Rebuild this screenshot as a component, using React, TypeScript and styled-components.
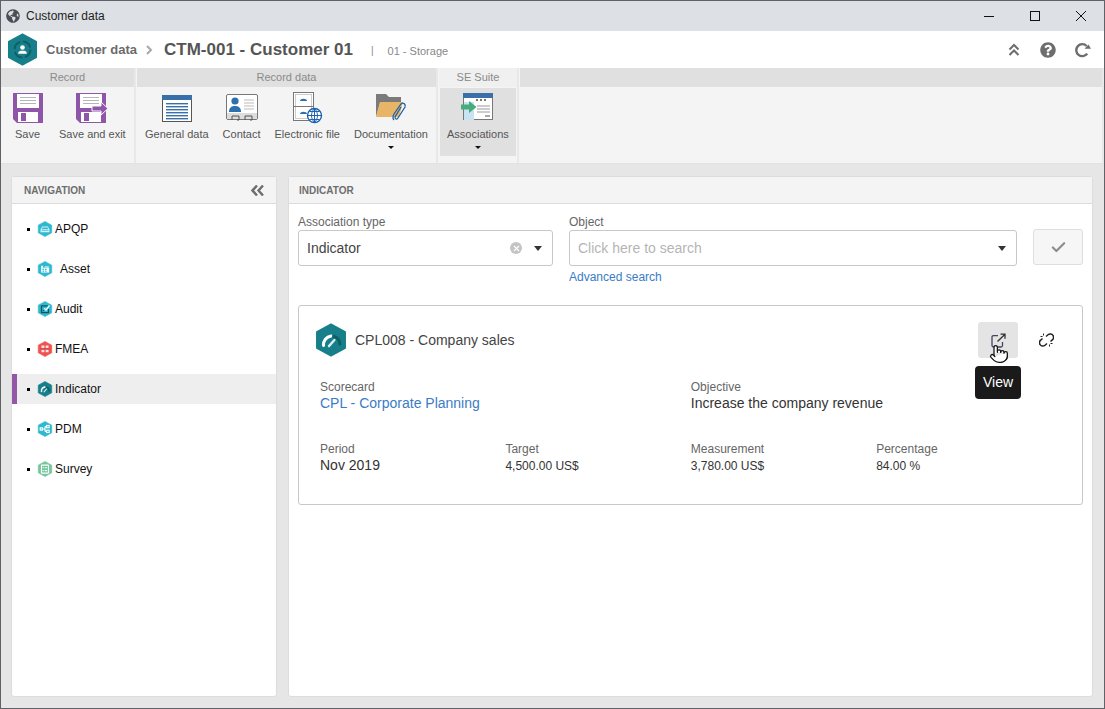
import React from "react";
import styled, { createGlobalStyle } from "styled-components";
import { FaGlobeAmericas, FaQuestionCircle } from "react-icons/fa";
import { Check, Pointer, X } from "lucide-react";

const GlobalStyle = createGlobalStyle`
  html, body {
    margin: 0;
    padding: 0;
    overflow: hidden;
  }
  body {
    font-family: "Liberation Sans", Arial, sans-serif;
    background: #e6e6e6;
  }
`;

const Win = styled.div`
  width: 1105px;
  height: 709px;
  box-sizing: border-box;
  border: 1px solid #5f6368;
  display: flex;
  flex-direction: column;
  overflow: hidden;
  background: #e6e6e6;
`;

const TitleBar = styled.div`
  height: 30px;
  flex: none;
  display: flex;
  align-items: center;
  background: #dde1e6;
  padding-left: 5px;
  color: #1e1e1e;
  font-size: 12px;
  gap: 6px;
`;

const WinControls = styled.div`
  margin-left: auto;
  display: flex;
  align-items: center;
`;

const WinButton = styled.div`
  width: 46px;
  height: 30px;
  display: flex;
  align-items: center;
  justify-content: center;
  color: #111;
`;

const Header = styled.div`
  height: 37px;
  flex: none;
  background: #fff;
  display: flex;
  align-items: center;
  padding-left: 5px;
`;

const Crumb = styled.span`
  margin-left: 7px;
  font-size: 13px;
  font-weight: bold;
  color: #6b6b6b;
`;

const CrumbSep = styled.span`
  margin: 0 11px 0 8px;
  color: #a8a8a8;
  display: flex;
`;

const RecordTitle = styled.span`
  font-size: 17px;
  font-weight: bold;
  color: #555;
`;

const Divider = styled.span`
  margin: 2px 0 0 18px;
  font-size: 10px;
  color: #888;
`;

const SubTitle = styled.span`
  margin: 2px 0 0 14px;
  font-size: 11px;
  color: #888;
`;

const HeaderTools = styled.div`
  margin-left: auto;
  margin-right: 13px;
  display: flex;
  align-items: center;
  gap: 18px;
  color: #6d6d6d;
`;

const Ribbon = styled.div`
  height: 95px;
  flex: none;
  display: flex;
  background: #f4f4f4;
  border-bottom: 1px solid #e2e2e2;
`;

const Group = styled.div<{ $width?: number; $grow?: boolean }>`
  width: ${(p) => (p.$width ? `${p.$width}px` : "auto")};
  flex: ${(p) => (p.$grow ? "1" : "none")};
  display: flex;
  flex-direction: column;
  border-right: 2px solid #e8e8e8;
  margin-right: ${(p) => (p.$grow ? 0 : 1)}px;
`;

const GroupLabel = styled.div<{ $light?: boolean }>`
  height: 19px;
  flex: none;
  background: ${(p) => (p.$light ? "#f0f0f0" : "#e0e0e0")};
  color: #8a8a8a;
  font-size: 11px;
  line-height: 19px;
  text-align: center;
`;

const GroupBody = styled.div<{ $pad?: number }>`
  display: flex;
  flex: 1;
  padding-left: ${(p) => p.$pad ?? 0}px;
`;

const RibbonItem = styled.div<{ $active?: boolean; $minWidth?: number }>`
  box-sizing: border-box;
  height: 68px;
  margin-top: 1px;
  padding: 0 7px;
  min-width: ${(p) => p.$minWidth ?? 0}px;
  display: flex;
  flex-direction: column;
  align-items: center;
  background: ${(p) => (p.$active ? "#e0e0e0" : "transparent")};
  color: #555;
  font-size: 11px;
  white-space: nowrap;
`;

const RibbonIcon = styled.div`
  height: 32px;
  margin-top: 5px;
  display: flex;
  align-items: flex-start;
  justify-content: center;
`;

const RibbonText = styled.div`
  margin-top: 2px;
  line-height: 14px;
`;

const Caret = styled.div<{ $size?: number; $depth?: number; $color?: string }>`
  width: 0;
  height: 0;
  border-left: ${(p) => p.$size ?? 3}px solid transparent;
  border-right: ${(p) => p.$size ?? 3}px solid transparent;
  border-top: ${(p) => p.$depth ?? p.$size ?? 3}px solid ${(p) => p.$color ?? "#111"};
`;

const ItemCaret = styled(Caret)`
  margin-top: 5px;
`;

const Body = styled.div`
  flex: 1;
  min-height: 0;
  display: flex;
  gap: 11px;
  padding: 12px 11px 11px 10px;
`;

const Panel = styled.div<{ $width?: number }>`
  width: ${(p) => (p.$width ? `${p.$width}px` : "auto")};
  flex: ${(p) => (p.$width ? "none" : "1")};
  min-width: 0;
  background: #fff;
  border: 1px solid #dcdcdc;
  border-radius: 3px;
  display: flex;
  flex-direction: column;
  box-sizing: border-box;
`;

const PanelHeader = styled.div<{ $pad: number }>`
  height: 27px;
  flex: none;
  box-sizing: border-box;
  background: #f4f4f4;
  border-bottom: 1px solid #dcdcdc;
  display: flex;
  align-items: center;
  justify-content: space-between;
  padding: 0 12px 0 ${(p) => p.$pad}px;
  font-size: 10px;
  font-weight: bold;
  color: #6e6e6e;
`;

const Collapse = styled.span`
  display: flex;
  color: #6e6e6e;
`;

const NavList = styled.ul`
  list-style: none;
  margin: 0;
  padding: 10px 0 0;
  display: flex;
  flex-direction: column;
  gap: 10px;
`;

const NavRow = styled.li<{ $active?: boolean }>`
  height: 30px;
  box-sizing: border-box;
  display: flex;
  align-items: center;
  padding-left: ${(p) => (p.$active ? 10 : 15)}px;
  background: ${(p) => (p.$active ? "#eeeeee" : "transparent")};
  border-left: ${(p) => (p.$active ? "5px solid #9457a8" : "none")};
  font-size: 12px;
  color: #111;
`;

const Bullet = styled.span`
  width: 3px;
  height: 3px;
  background: #000;
  margin-right: 7px;
`;

const NavLabel = styled.span<{ $indent?: number }>`
  margin-left: ${(p) => p.$indent ?? 2}px;
`;

const MainContent = styled.div`
  padding: 11px 9px 0;
`;

const SearchRow = styled.div`
  display: flex;
  gap: 16px;
  align-items: flex-start;
`;

const Field = styled.div<{ $width?: number }>`
  width: ${(p) => (p.$width ? `${p.$width}px` : "auto")};
  flex: ${(p) => (p.$width ? "none" : "1")};
`;

const FieldLabel = styled.div`
  font-size: 12px;
  line-height: 14px;
  height: 15px;
  color: #666;
`;

const Select = styled.div`
  height: 36px;
  box-sizing: border-box;
  border: 1px solid #c8c8c8;
  border-radius: 3px;
  display: flex;
  align-items: center;
  padding: 0 10px 0 8px;
  font-size: 14px;
  color: #444;
`;

const Placeholder = styled.span`
  color: #b5b5b5;
`;

const SelectTools = styled.span`
  margin-left: auto;
  display: flex;
  align-items: center;
  gap: 12px;
`;

const ClearDot = styled.span`
  width: 12px;
  height: 12px;
  border-radius: 50%;
  background: #c4c4c4;
  color: #fff;
  display: flex;
  align-items: center;
  justify-content: center;
`;

const SearchLink = styled.a`
  display: block;
  margin-top: 4px;
  font-size: 12px;
  line-height: 14px;
  color: #3a7cc5;
`;

const ConfirmButton = styled.div`
  width: 50px;
  height: 36px;
  flex: none;
  margin: 14px 0 0;
  box-sizing: border-box;
  border: 1px solid #dedede;
  border-radius: 3px;
  background: #f6f6f6;
  color: #8c8c8c;
  display: flex;
  align-items: center;
  justify-content: center;
`;

const Card = styled.div`
  position: relative;
  margin-top: 21px;
  height: 200px;
  box-sizing: border-box;
  border: 1px solid #c8c8c8;
  border-radius: 3px;
  padding: 17px 16px 0 15px;
`;

const CardHead = styled.div`
  display: flex;
  align-items: center;
  height: 34px;
  font-size: 14px;
  color: #444;
  gap: 7px;
`;

const CardActions = styled.div`
  margin-left: auto;
  display: flex;
  align-items: center;
  gap: 8px;
`;

const ActionButton = styled.div<{ $hover?: boolean }>`
  width: 40px;
  height: 36px;
  border-radius: 3px;
  background: ${(p) => (p.$hover ? "#e4e4e4" : "transparent")};
  color: #222;
  display: flex;
  align-items: center;
  justify-content: center;
`;

const HandCursor = styled.span`
  position: absolute;
  left: 690px;
  top: 38px;
  display: flex;
  color: #111;
`;

const Tooltip = styled.div`
  position: absolute;
  left: 676px;
  top: 60px;
  width: 46px;
  height: 33px;
  border-radius: 4px;
  background: #1a1a1a;
  color: #fff;
  font-size: 14px;
  line-height: 33px;
  text-align: center;
`;

const InfoGrid = styled.div`
  display: grid;
  grid-template-columns: repeat(4, 185.4px);
  row-gap: 21px;
  margin: 23px 0 0 6px;
`;

const Info = styled.div<{ $span?: number }>`
  grid-column: span ${(p) => p.$span ?? 1};
  height: 41px;
`;

const InfoLabel = styled.div`
  font-size: 12px;
  line-height: 14px;
  color: #666;
`;

const InfoValue = styled.div<{ $link?: boolean; $small?: boolean }>`
  margin-top: ${(p) => (p.$small ? 2 : 1)}px;
  font-size: ${(p) => (p.$small ? 12 : 14)}px;
  line-height: 16px;
  color: ${(p) => (p.$link ? "#3a7cc5" : "#333")};
`;

const HEX = "50,3 92,26 92,74 50,97 8,74 8,26";

const Hex = ({
  size,
  color,
  children,
}: {
  size: number;
  color: string;
  children?: React.ReactNode;
}) => (
  <svg width={size} height={size} viewBox="0 0 100 100" style={{ flex: "none" }}>
    <polygon points={HEX} fill={color} stroke={color} strokeWidth="4" strokeLinejoin="round" />
    {children}
  </svg>
);

const Gauge = () => (
  <g fill="none" strokeLinecap="round">
    <path d="M28 66 A26 26 0 0 1 50 38" stroke="#fff" strokeWidth="9" />
    <path d="M58 39 A26 26 0 0 1 76 62" stroke="#0f5f66" strokeWidth="9" />
    <path d="M44 68 L60 50" stroke="#d7eef0" strokeWidth="7" />
  </g>
);

const navItems: { label: string; color: string; indent?: number; glyph: React.ReactNode }[] = [
  {
    label: "APQP",
    color: "#2fb9d0",
    glyph: (
      <g>
        <path d="M22 54 L32 34 H68 L78 54 V70 H22Z" fill="#d8f3f7" />
        <path d="M34 40 H66 L71 52 H29Z" fill="#2fb9d0" />
        <rect x="28" y="57" width="44" height="4" fill="#2fb9d0" />
      </g>
    ),
  },
  {
    label: "Asset",
    color: "#2fb9d0",
    indent: 7,
    glyph: (
      <g fill="#fff">
        <rect x="26" y="30" width="12" height="12" />
        <rect x="26" y="42" width="50" height="30" />
        <rect x="48" y="34" width="26" height="6" />
        <rect x="34" y="48" width="10" height="8" fill="#2fb9d0" />
        <rect x="50" y="48" width="10" height="8" fill="#2fb9d0" />
        <rect x="34" y="60" width="10" height="7" fill="#2fb9d0" />
        <rect x="50" y="60" width="10" height="7" fill="#2fb9d0" />
      </g>
    ),
  },
  {
    label: "Audit",
    color: "#2fb9d0",
    glyph: (
      <g fill="none" stroke="#20505c" strokeWidth="8">
        <path d="M68 30 H28 V72 H72 V50" />
        <path d="M46 46 L56 56 L78 28" stroke="#fff" />
        <rect x="36" y="56" width="8" height="8" fill="#20505c" stroke="none" />
      </g>
    ),
  },
  {
    label: "FMEA",
    color: "#ee5350",
    glyph: (
      <g fill="#fde0df">
        <rect x="28" y="28" width="18" height="16" />
        <rect x="54" y="28" width="18" height="16" />
        <rect x="28" y="54" width="18" height="16" />
        <rect x="54" y="54" width="18" height="16" />
        <path d="M22 50 H78" stroke="#b93b39" strokeWidth="5" />
      </g>
    ),
  },
  { label: "Indicator", color: "#167f8a", glyph: <Gauge /> },
  {
    label: "PDM",
    color: "#2fb9d0",
    glyph: (
      <g fill="none" stroke="#fff" strokeWidth="7">
        <rect x="20" y="43" width="14" height="14" />
        <rect x="60" y="28" width="16" height="14" />
        <rect x="60" y="58" width="16" height="14" />
        <path d="M34 50 H50 M50 35 V65 M50 35 H60 M50 65 H60" />
      </g>
    ),
  },
  {
    label: "Survey",
    color: "#74c69d",
    glyph: (
      <g fill="none" stroke="#fff" strokeWidth="7">
        <rect x="28" y="26" width="44" height="50" rx="4" />
        <path d="M48 42 H64 M48 60 H64" />
        <rect x="35" y="38" width="7" height="7" fill="#fff" stroke="none" />
        <rect x="35" y="56" width="7" height="7" fill="#fff" stroke="none" />
      </g>
    ),
  },
];

const Floppy = ({ exit }: { exit?: boolean }) => (
  <svg width={exit ? 33 : 30} height="30" viewBox={exit ? "0 0 33 30" : "0 0 30 30"}>
    <path d="M0 0H30V30H4L0 26Z" fill="#8e55a8" />
    <rect x="4" y="1" width="22" height="14" fill="#fff" />
    <rect x="7" y="4" width="16" height="1" fill="#b5b5b5" />
    <rect x="7" y="7" width="16" height="1" fill="#b5b5b5" />
    <rect x="7" y="10" width="16" height="1" fill="#b5b5b5" />
    <rect x="5" y="19" width="20" height="10" fill="#fff" />
    <rect x="8" y="20" width="5" height="8" fill="#8e55a8" />
    {exit && (
      <path d="M16 13H25V9L32 15.5L25 22V18H16Z" fill="#8e55a8" stroke="#fff" strokeWidth="1" />
    )}
  </svg>
);

const GeneralIcon = () => (
  <svg width="30" height="30" viewBox="0 0 30 30">
    <rect x="0.5" y="2.5" width="29" height="26" fill="#fff" stroke="#555" />
    <rect x="0" y="2" width="30" height="5" fill="#3a70a8" />
    {[10, 13, 16, 19, 22, 25].map((y) => (
      <rect key={y} x="4" y={y} width="22" height="1.4" fill="#3a70a8" />
    ))}
  </svg>
);

const ContactIcon = () => (
  <svg width="32" height="30" viewBox="0 0 32 30">
    <rect x="0.5" y="1.5" width="31" height="25" rx="1.5" fill="#fff" stroke="#777" />
    <path d="M1 20H31V26H1Z" fill="#ddd" />
    <circle cx="9" cy="8" r="3.6" fill="#2e6fad" />
    <path d="M3 19C3 14 6 13 9 13S15 14 15 19Z" fill="#2e6fad" />
    <path d="M18 7H28M18 10H28M18 13H28M18 16H28" stroke="#bbb" strokeWidth="1" />
    <path d="M6 27V23H13V27H11M19 27V23H26V27H24" fill="none" stroke="#555" strokeWidth="1" />
  </svg>
);

const ElectronicIcon = () => (
  <svg width="30" height="30" viewBox="0 1 30 30" overflow="visible">
    <rect x="1.5" y="0.5" width="20" height="28" fill="#fff" stroke="#777" />
    <rect x="3.5" y="2.5" width="16" height="24" fill="none" stroke="#ccc" />
    <path d="M1 14.5H22" stroke="#777" />
    <path d="M8 9C8 6 15 6 15 9Z" fill="#2e6fad" />
    <path d="M8 22C8 19 15 19 15 22Z" fill="#2e6fad" />
    <circle cx="22.5" cy="23.5" r="7" fill="#fff" stroke="#1f62ad" strokeWidth="1.4" />
    <path
      d="M15.5 23.5H29.5M22.5 16.5V30.5M17.5 19.5H27.5M17.5 27.5H27.5M22.5 16.5C18.5 20.5 18.5 26.5 22.5 30.5C26.5 26.5 26.5 20.5 22.5 16.5"
      fill="none"
      stroke="#1f62ad"
    />
  </svg>
);

const FolderIcon = () => (
  <svg width="32" height="30" viewBox="0 0 32 30">
    <path d="M1 1H11L14 4H26V10H5L1 24Z" fill="#7a7a7a" />
    <path d="M5 9H28L24 24H1Z" fill="#e8b566" />
    <path
      d="M19 27C17 25 18 23 19 21L26 11C28 9 31 11 30 14L23 25C22 27 20 26 20 24L26 14"
      fill="none"
      stroke="#1f62ad"
      strokeWidth="1.3"
    />
  </svg>
);

const AssocIcon = () => (
  <svg width="30" height="28" viewBox="0 0 30 28" overflow="visible">
    <rect x="0.5" y="0.5" width="29" height="26" fill="#fff" stroke="#777" />
    <rect x="0" y="0" width="30" height="5" fill="#3a70a8" />
    <rect x="1" y="9" width="10" height="18" fill="#c9e3f3" />
    <path d="M13 7H15M17 7H19M21 7H23" stroke="#777" strokeWidth="2" />
    <path d="M14 13H27M14 16H27M14 19H27" stroke="#999" />
    <rect x="22" y="22" width="5" height="2" fill="#aaa" />
    <path d="M-2 11.5H6V8L13.5 14L6 20V16.5H-2Z" fill="#45ad7c" />
  </svg>
);

const ChevronGlyph = () => (
  <svg width="8" height="10" viewBox="0 0 8 10">
    <path d="M2 1L6 5L2 9" fill="none" stroke="currentColor" strokeWidth="2" />
  </svg>
);

const DoubleUp = () => (
  <svg width="16" height="14" viewBox="0 0 16 14">
    <path d="M3.5 6.5L8 2L12.5 6.5M3.5 12L8 7.5L12.5 12" fill="none" stroke="currentColor" strokeWidth="2" />
  </svg>
);

const DoubleLeft = () => (
  <svg width="13" height="11" viewBox="0 0 13 11">
    <path d="M6 0.5L1.5 5.5L6 10.5M12 0.5L7.5 5.5L12 10.5" fill="none" stroke="currentColor" strokeWidth="2.4" />
  </svg>
);

const Refresh = () => (
  <svg width="17" height="16" viewBox="0 0 17 16">
    <path d="M13.2 11.6A6 6 0 1 1 12.6 4" fill="none" stroke="currentColor" strokeWidth="2.4" />
    <path d="M10.5 6.8H17L14.5 2.5Z" fill="currentColor" />
  </svg>
);

const MinGlyph = () => (
  <svg width="10" height="10" viewBox="0 0 10 10">
    <rect x="0" y="5" width="10" height="1" fill="currentColor" />
  </svg>
);

const MaxGlyph = () => (
  <svg width="10" height="10" viewBox="0 0 10 10">
    <rect x="0.5" y="0.5" width="9" height="9" fill="none" stroke="currentColor" />
  </svg>
);

const CloseGlyph = () => (
  <svg width="10" height="10" viewBox="0 0 10 10">
    <path d="M0 0L10 10M10 0L0 10" stroke="currentColor" strokeWidth="1" />
  </svg>
);

const OpenGlyph = () => (
  <svg width="15" height="15" viewBox="0 0 15 15" fill="none" strokeWidth="1.3">
    <path d="M7 2.7H2.5Q1 2.7 1 4.2V12.5Q1 14 2.5 14H10Q11.5 14 11.5 12.5V9" stroke="#4a4060" />
    <path d="M6.5 8.5L14 1.2M9.5 1.2H14V5.8" stroke="#333" />
  </svg>
);

const BrokenLink = () => (
  <svg width="15" height="14" viewBox="0 0 15 14" fill="none" stroke="#222" strokeWidth="1.5">
    <path d="M7 3.5L9 1.8C10.5 0.5 13 0.7 14 2.5C15 4.2 14.5 6 13 7.2L11.5 8.5" />
    <path d="M8 10.5L6 12.2C4.5 13.5 2 13.3 1 11.5C0 9.8 0.5 8 2 6.8L3.5 5.5" />
    <path d="M4.5 0.5V2.5M1.5 3.5H3.5M10.5 11.5V13.5M11.5 10.5H13.5" strokeWidth="1" />
  </svg>
);

export default function App() {
  return (
    <Win>
      <GlobalStyle />
      <TitleBar>
        <FaGlobeAmericas size={14} color="#4a4f55" />
        Customer data
        <WinControls>
          <WinButton>
            <MinGlyph />
          </WinButton>
          <WinButton>
            <MaxGlyph />
          </WinButton>
          <WinButton>
            <CloseGlyph />
          </WinButton>
        </WinControls>
      </TitleBar>
      <Header>
        <Hex size={33} color="#167f8a">
          <circle cx="50" cy="50" r="24" fill="none" stroke="#0f5f66" strokeWidth="6" strokeDasharray="30 8" />
          <circle cx="50" cy="44" r="7" fill="#fff" />
          <path d="M37 63C37 55 43 54 50 54S63 55 63 63Z" fill="#fff" />
        </Hex>
        <Crumb>Customer data</Crumb>
        <CrumbSep>
          <ChevronGlyph />
        </CrumbSep>
        <RecordTitle>CTM-001 - Customer 01</RecordTitle>
        <Divider>|</Divider>
        <SubTitle>01 - Storage</SubTitle>
        <HeaderTools>
          <DoubleUp />
          <FaQuestionCircle size={16} />
          <Refresh />
        </HeaderTools>
      </Header>
      <Ribbon>
        <Group $width={133}>
          <GroupLabel>Record</GroupLabel>
          <GroupBody $pad={2}>
            <RibbonItem $minWidth={49}>
              <RibbonIcon>
                <Floppy />
              </RibbonIcon>
              <RibbonText>Save</RibbonText>
            </RibbonItem>
            <RibbonItem>
              <RibbonIcon>
                <Floppy exit />
              </RibbonIcon>
              <RibbonText>Save and exit</RibbonText>
            </RibbonItem>
          </GroupBody>
        </Group>
        <Group $width={299}>
          <GroupLabel>Record data</GroupLabel>
          <GroupBody $pad={1}>
            <RibbonItem>
              <RibbonIcon>
                <GeneralIcon />
              </RibbonIcon>
              <RibbonText>General data</RibbonText>
            </RibbonItem>
            <RibbonItem>
              <RibbonIcon>
                <ContactIcon />
              </RibbonIcon>
              <RibbonText>Contact</RibbonText>
            </RibbonItem>
            <RibbonItem>
              <RibbonIcon>
                <ElectronicIcon />
              </RibbonIcon>
              <RibbonText>Electronic file</RibbonText>
            </RibbonItem>
            <RibbonItem>
              <RibbonIcon>
                <FolderIcon />
              </RibbonIcon>
              <RibbonText>Documentation</RibbonText>
              <ItemCaret />
            </RibbonItem>
          </GroupBody>
        </Group>
        <Group $width={78}>
          <GroupLabel $light>SE Suite</GroupLabel>
          <GroupBody $pad={1}>
            <RibbonItem $active>
              <RibbonIcon>
                <AssocIcon />
              </RibbonIcon>
              <RibbonText>Associations</RibbonText>
              <ItemCaret />
            </RibbonItem>
          </GroupBody>
        </Group>
        <Group $grow>
          <GroupLabel />
        </Group>
      </Ribbon>
      <Body>
        <Panel $width={266}>
          <PanelHeader $pad={12}>
            NAVIGATION
            <Collapse>
              <DoubleLeft />
            </Collapse>
          </PanelHeader>
          <NavList>
            {navItems.map((item) => (
              <NavRow key={item.label} $active={item.label === "Indicator"}>
                <Bullet />
                <Hex size={16} color={item.color}>
                  {item.glyph}
                </Hex>
                <NavLabel $indent={item.indent}>{item.label}</NavLabel>
              </NavRow>
            ))}
          </NavList>
        </Panel>
        <Panel>
          <PanelHeader $pad={10}>INDICATOR</PanelHeader>
          <MainContent>
            <SearchRow>
              <Field $width={255}>
                <FieldLabel>Association type</FieldLabel>
                <Select>
                  Indicator
                  <SelectTools>
                    <ClearDot>
                      <X size={9} strokeWidth={3} />
                    </ClearDot>
                    <Caret $size={4} $depth={5} $color="#333" />
                  </SelectTools>
                </Select>
              </Field>
              <Field>
                <FieldLabel>Object</FieldLabel>
                <Select>
                  <Placeholder>Click here to search</Placeholder>
                  <SelectTools>
                    <Caret $size={4} $depth={5} $color="#333" />
                  </SelectTools>
                </Select>
                <SearchLink>Advanced search</SearchLink>
              </Field>
              <ConfirmButton>
                <Check size={17} strokeWidth={3} />
              </ConfirmButton>
            </SearchRow>
            <Card>
              <CardHead>
                <Hex size={34} color="#167f8a">
                  <Gauge />
                </Hex>
                CPL008 - Company sales
                <CardActions>
                  <ActionButton $hover>
                    <OpenGlyph />
                  </ActionButton>
                  <ActionButton>
                    <BrokenLink />
                  </ActionButton>
                </CardActions>
              </CardHead>
              <HandCursor>
                <Pointer size={20} fill="#fff" strokeWidth={1.5} />
              </HandCursor>
              <Tooltip>View</Tooltip>
              <InfoGrid>
                <Info $span={2}>
                  <InfoLabel>Scorecard</InfoLabel>
                  <InfoValue $link>CPL - Corporate Planning</InfoValue>
                </Info>
                <Info $span={2}>
                  <InfoLabel>Objective</InfoLabel>
                  <InfoValue>Increase the company revenue</InfoValue>
                </Info>
                <Info>
                  <InfoLabel>Period</InfoLabel>
                  <InfoValue>Nov 2019</InfoValue>
                </Info>
                <Info>
                  <InfoLabel>Target</InfoLabel>
                  <InfoValue $small>4,500.00 US$</InfoValue>
                </Info>
                <Info>
                  <InfoLabel>Measurement</InfoLabel>
                  <InfoValue $small>3,780.00 US$</InfoValue>
                </Info>
                <Info>
                  <InfoLabel>Percentage</InfoLabel>
                  <InfoValue $small>84.00 %</InfoValue>
                </Info>
              </InfoGrid>
            </Card>
          </MainContent>
        </Panel>
      </Body>
    </Win>
  );
}
